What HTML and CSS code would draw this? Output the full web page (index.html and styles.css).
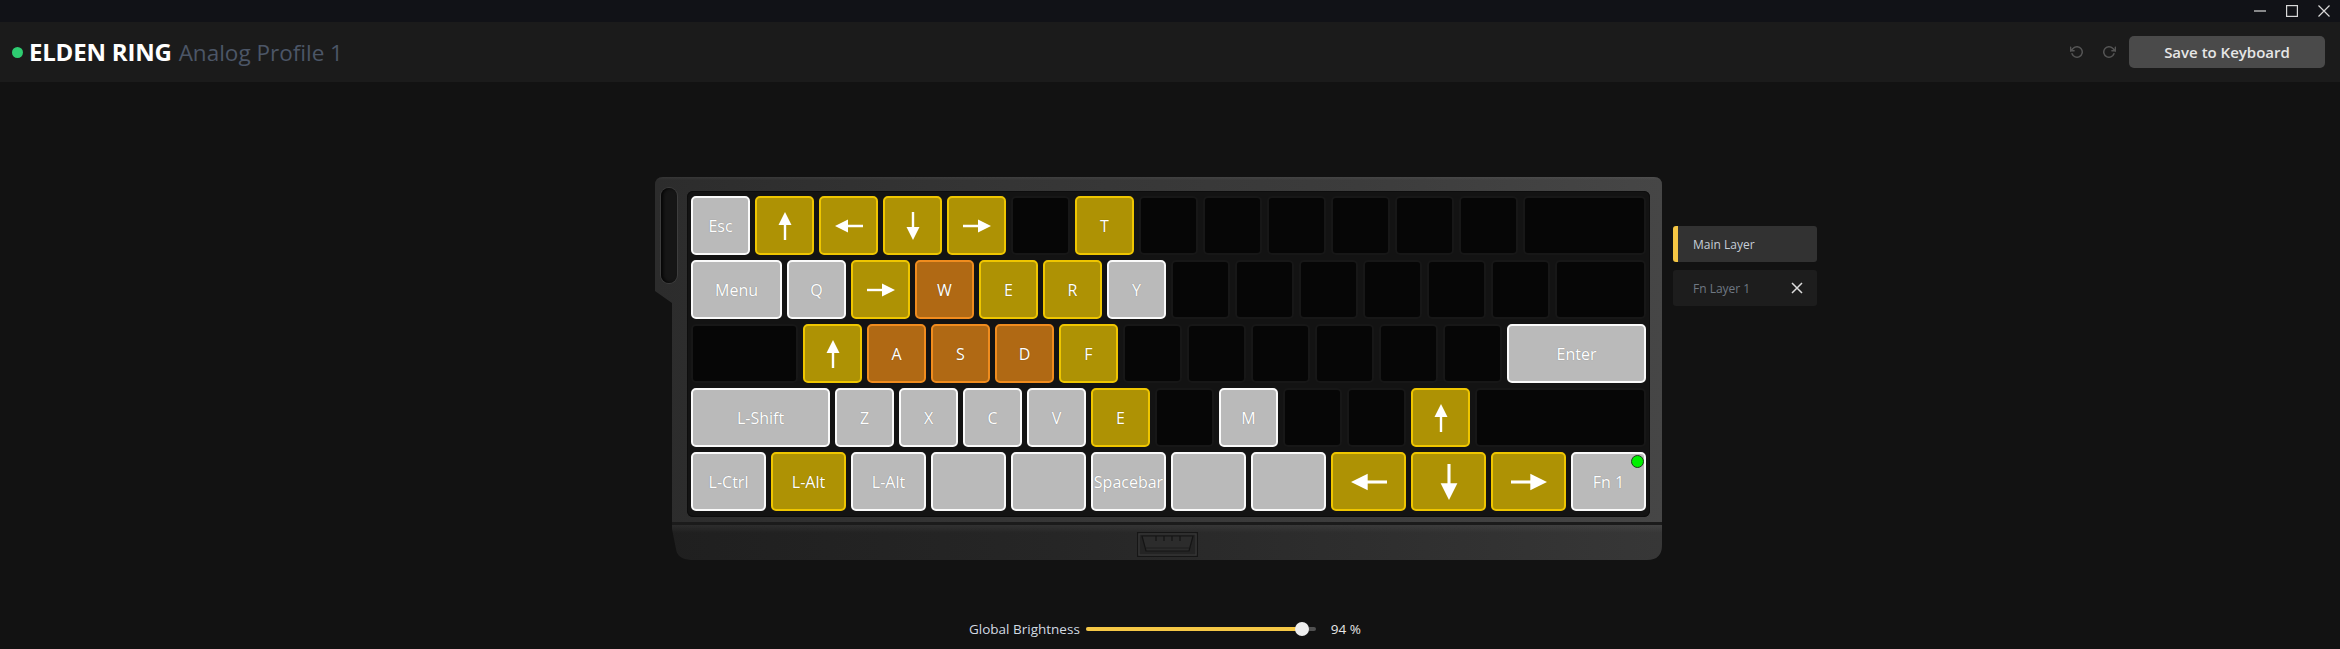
FILE: index.html
```html
<!DOCTYPE html>
<html lang="en">
<head>
<meta charset="utf-8">
<title>Analog Profile</title>
<link rel="stylesheet" href="styles.css">
</head>
<body>
<div class="titlebar">
  <div class="winbtn"><svg viewBox="0 0 12 12"><path d="M0 6H12" stroke="#d8d8d8" stroke-width="1.2"/></svg></div>
  <div class="winbtn"><svg viewBox="0 0 12 12"><rect x="0.6" y="0.6" width="10.8" height="10.8" fill="none" stroke="#d8d8d8" stroke-width="1.2"/></svg></div>
  <div class="winbtn"><svg viewBox="0 0 12 12"><path d="M0.5 0.5L11.5 11.5M11.5 0.5L0.5 11.5" stroke="#d8d8d8" stroke-width="1.2"/></svg></div>
</div>
<header class="header">
  <span class="status-dot"></span>
  <h1 class="title"><span class="game">ELDEN RING</span><span class="profile">Analog Profile 1</span></h1>
  <div class="header-actions">
    <button class="icon-btn undo"><svg viewBox="0 0 24 24"><polyline points="1 4 1 10 7 10" fill="none" stroke="#555" stroke-width="2.6" stroke-linecap="round" stroke-linejoin="round"/><path d="M3.51 15a9 9 0 1 0 2.13-9.36L1 10" fill="none" stroke="#555" stroke-width="2.6" stroke-linecap="round" stroke-linejoin="round"/></svg></button>
    <button class="icon-btn redo"><svg viewBox="0 0 24 24"><polyline points="23 4 23 10 17 10" fill="none" stroke="#555" stroke-width="2.6" stroke-linecap="round" stroke-linejoin="round"/><path d="M20.49 15a9 9 0 1 1-2.12-9.36L23 10" fill="none" stroke="#555" stroke-width="2.6" stroke-linecap="round" stroke-linejoin="round"/></svg></button>
    <button class="save-btn">Save to Keyboard</button>
  </div>
</header>
<main class="main">
  <div class="stage">
    <div class="chassis">
      <div class="topcase">
        <div class="ear"><div class="slot"></div></div>
        <div class="plate">
          <div class="krow">
            <div class="key k1 gray">Esc</div>
            <div class="key k1 yel"><svg class="arr up" viewBox="0 0 28 14"><path d="M0 7H16" stroke="#fff" stroke-width="2.4"/><path d="M15 0.5L28 7L15 13.5Z" fill="#fff"/></svg></div>
            <div class="key k1 yel"><svg class="arr left" viewBox="0 0 28 14"><path d="M0 7H16" stroke="#fff" stroke-width="2.4"/><path d="M15 0.5L28 7L15 13.5Z" fill="#fff"/></svg></div>
            <div class="key k1 yel"><svg class="arr down" viewBox="0 0 28 14"><path d="M0 7H16" stroke="#fff" stroke-width="2.4"/><path d="M15 0.5L28 7L15 13.5Z" fill="#fff"/></svg></div>
            <div class="key k1 yel"><svg class="arr" viewBox="0 0 28 14"><path d="M0 7H16" stroke="#fff" stroke-width="2.4"/><path d="M15 0.5L28 7L15 13.5Z" fill="#fff"/></svg></div>
            <div class="key k1 off"></div>
            <div class="key k1 yel">T</div>
            <div class="key k1 off"></div>
            <div class="key k1 off"></div>
            <div class="key k1 off"></div>
            <div class="key k1 off"></div>
            <div class="key k1 off"></div>
            <div class="key k1 off"></div>
            <div class="key k2 off"></div>
          </div>
          <div class="krow">
            <div class="key k15 gray">Menu</div>
            <div class="key k1 gray">Q</div>
            <div class="key k1 yel"><svg class="arr" viewBox="0 0 28 14"><path d="M0 7H16" stroke="#fff" stroke-width="2.4"/><path d="M15 0.5L28 7L15 13.5Z" fill="#fff"/></svg></div>
            <div class="key k1 org">W</div>
            <div class="key k1 yel">E</div>
            <div class="key k1 yel">R</div>
            <div class="key k1 gray">Y</div>
            <div class="key k1 off"></div>
            <div class="key k1 off"></div>
            <div class="key k1 off"></div>
            <div class="key k1 off"></div>
            <div class="key k1 off"></div>
            <div class="key k1 off"></div>
            <div class="key k15 off"></div>
          </div>
          <div class="krow">
            <div class="key k175 off"></div>
            <div class="key k1 yel"><svg class="arr up" viewBox="0 0 28 14"><path d="M0 7H16" stroke="#fff" stroke-width="2.4"/><path d="M15 0.5L28 7L15 13.5Z" fill="#fff"/></svg></div>
            <div class="key k1 org">A</div>
            <div class="key k1 org">S</div>
            <div class="key k1 org">D</div>
            <div class="key k1 yel">F</div>
            <div class="key k1 off"></div>
            <div class="key k1 off"></div>
            <div class="key k1 off"></div>
            <div class="key k1 off"></div>
            <div class="key k1 off"></div>
            <div class="key k1 off"></div>
            <div class="key k225 gray">Enter</div>
          </div>
          <div class="krow">
            <div class="key k225 gray">L-Shift</div>
            <div class="key k1 gray">Z</div>
            <div class="key k1 gray">X</div>
            <div class="key k1 gray">C</div>
            <div class="key k1 gray">V</div>
            <div class="key k1 yel">E</div>
            <div class="key k1 off"></div>
            <div class="key k1 gray">M</div>
            <div class="key k1 off"></div>
            <div class="key k1 off"></div>
            <div class="key k1 yel"><svg class="arr up" viewBox="0 0 28 14"><path d="M0 7H16" stroke="#fff" stroke-width="2.4"/><path d="M15 0.5L28 7L15 13.5Z" fill="#fff"/></svg></div>
            <div class="key k275 off"></div>
          </div>
          <div class="krow">
            <div class="key k125 gray">L-Ctrl</div>
            <div class="key k125 yel">L-Alt</div>
            <div class="key k125 gray">L-Alt</div>
            <div class="key k125 gray"></div>
            <div class="key k125 gray"></div>
            <div class="key k125 gray">Spacebar</div>
            <div class="key k125 gray"></div>
            <div class="key k125 gray"></div>
            <div class="key k125 yel"><svg class="arr big left" viewBox="0 0 28 14"><path d="M0 7H16" stroke="#fff" stroke-width="2.4"/><path d="M15 0.5L28 7L15 13.5Z" fill="#fff"/></svg></div>
            <div class="key k125 yel"><svg class="arr big down" viewBox="0 0 28 14"><path d="M0 7H16" stroke="#fff" stroke-width="2.4"/><path d="M15 0.5L28 7L15 13.5Z" fill="#fff"/></svg></div>
            <div class="key k125 yel"><svg class="arr big" viewBox="0 0 28 14"><path d="M0 7H16" stroke="#fff" stroke-width="2.4"/><path d="M15 0.5L28 7L15 13.5Z" fill="#fff"/></svg></div>
            <div class="key k125 gray">Fn 1<span class="fn-dot"></span></div>
          </div>
        </div>
      </div>
      <div class="base">
        <div class="connector"><svg viewBox="0 0 61 25"><rect x="0.5" y="0.5" width="60" height="24" fill="#242424" stroke="#161616"/><rect x="2" y="2" width="57" height="21" fill="none" stroke="#3a3a3a" stroke-width="1"/><path d="M5 4H56L52 19H9Z" fill="#2c2c2c" stroke="#141414" stroke-width="1.2"/><path d="M9 16H52" stroke="#1c1c1c"/><path d="M19 4V9M27 4V9M35 4V9M43 4V9" stroke="#141414" stroke-width="1.2"/></svg></div>
      </div>
    </div>
    <div class="layers">
      <div class="layer active">Main Layer</div>
      <div class="layer inactive"><span>Fn Layer 1</span><svg class="close-x" viewBox="0 0 12 12"><path d="M1 1L11 11M11 1L1 11" stroke="#dcdcdc" stroke-width="1.5"/></svg></div>
    </div>
  </div>
  <div class="brightness">
    <span class="b-label">Global Brightness</span>
    <div class="slider">
      <div class="track"><div class="fill" style="width:94%"></div></div>
      <div class="thumb" style="left:94%"></div>
    </div>
    <span class="pct">94 %</span>
  </div>
</main>
</body>
</html>
```

FILE: styles.css
```css
* { box-sizing: border-box; }
html, body { margin: 0; padding: 0; }
body {
  width: 2340px;
  height: 649px;
  overflow: hidden;
  background: #121212;
  font-family: "Open Sans", "Noto Sans", sans-serif;
  color: #fff;
}

/* title bar */
.titlebar {
  height: 22px;
  background: #111217;
  display: flex;
  justify-content: flex-end;
}
.winbtn {
  width: 32px;
  height: 22px;
  display: flex;
  align-items: center;
  justify-content: center;
}
.winbtn svg { width: 12px; height: 12px; display: block; }

/* header */
.header {
  height: 60px;
  background: #1b1b1b;
  display: flex;
  align-items: center;
  padding: 0 15px 0 12px;
}
.status-dot {
  width: 11px;
  height: 11px;
  border-radius: 50%;
  background: #2ecc71;
  margin-right: 6px;
  flex: none;
}
.title {
  margin: 0;
  font-size: 24px;
  line-height: 1;
  display: flex;
  align-items: baseline;
  gap: 7px;
}
.game { font-weight: 700; color: #ffffff; letter-spacing: -0.2px; }
.profile { font-weight: 400; font-size: 22.5px; color: #4c5667; }
.header-actions {
  margin-left: auto;
  display: flex;
  align-items: center;
}
.icon-btn {
  background: none;
  border: 0;
  padding: 0;
  width: 14px;
  height: 14px;
  display: block;
}
.icon-btn svg { width: 14px; height: 14px; display: block; }
.icon-btn.undo { margin-right: 18px; }
.icon-btn.redo { margin-right: 13px; }
.save-btn {
  width: 196px;
  height: 32px;
  border: 0;
  border-radius: 5px;
  background: #4a4a4a;
  color: #e6e6e6;
  font-family: "Open Sans", sans-serif;
  font-size: 15px;
  font-weight: 600;
}

/* stage */
.stage {
  display: flex;
  align-items: flex-start;
  gap: 11px;
  padding: 95px 0 0 655px;
}
.chassis {
  width: 1007px;
  height: 383px;
  flex: none;
  display: flex;
  flex-direction: column;
  clip-path: path("M8 0H999Q1007 0 1007 8V368Q1007 383 992 383H36Q22 382 21 372L17 352V126L0 114V8Q0 0 8 0Z");
}
.topcase {
  height: 345px;
  display: flex;
  align-items: flex-start;
  padding-right: 12px;
  background:
    linear-gradient(180deg, rgba(255,255,255,0.05) 0, rgba(255,255,255,0) 3px),
    linear-gradient(90deg, #2c2c2c 0%, #353535 35%, #3c3c3c 70%, #464646 100%);
}
.ear {
  width: 32px;
  flex: none;
  padding: 11px 0 0 6px;
}
.slot {
  width: 16px;
  height: 95px;
  border-radius: 8px;
  background: #161616;
  box-shadow: inset 2px 0 3px #050505, 0 0 0 1px #3e3e3e;
}
.plate {
  margin-top: 14px;
  width: 963px;
  flex: none;
  padding: 5px 4px 6px 4px;
  background: #131313;
  border-radius: 6px;
  box-shadow: inset 0 0 0 1px #0d0d0d;
  display: flex;
  flex-direction: column;
  gap: 5px;
}
.krow {
  display: flex;
  gap: 5px;
  height: 59px;
}
.key {
  position: relative;
  flex: none;
  height: 59px;
  border-radius: 5px;
  display: flex;
  align-items: center;
  justify-content: center;
  font-size: 16px;
  color: #ffffff;
  text-shadow: 0 0 1px rgba(0,0,0,0.35);
}
.k1 { width: 59px; }
.k125 { width: 75px; }
.k15 { width: 91px; }
.k175 { width: 107px; }
.k2 { width: 123px; }
.k225 { width: 139px; }
.k275 { width: 171px; }

.gray { background: #bababa; border: 2px solid #fafafa; }
.yel { background: #ae9204; border: 2px solid #efc600; }
.org { background: #b06914; border: 2px solid #f08c1e; }
.off { background: #060606; border: 2px solid #171717; }

.arr { width: 28px; height: 14px; display: block; }
.arr.big { width: 36px; height: 18px; }
.arr.up { transform: rotate(-90deg); }
.arr.down { transform: rotate(90deg); }
.arr.left { transform: rotate(180deg); }

.fn-dot {
  position: absolute;
  top: 1px;
  right: 0;
  width: 13px;
  height: 13px;
  border-radius: 50%;
  background: #00f000;
  border: 1px solid #1e3a1e;
}

.base {
  height: 38px;
  padding: 7px 0 0 482px;
  border-top: 3px solid #1b1b1b;
  background:
    linear-gradient(180deg, rgba(255,255,255,0.06) 0, rgba(255,255,255,0) 8px),
    linear-gradient(90deg, #1f1f1f 0%, #262626 40%, #2e2e2e 70%, #373737 100%);
}
.connector { width: 61px; height: 25px; }
.connector svg { width: 61px; height: 25px; display: block; }

/* layers */
.layers {
  margin-top: 49px;
  width: 144px;
  flex: none;
  display: flex;
  flex-direction: column;
  gap: 8px;
}
.layer {
  height: 36px;
  border-radius: 3px;
  display: flex;
  align-items: center;
  font-size: 12px;
}
.layer.active {
  background: #323232;
  border-left: 5px solid #f5c644;
  padding-left: 15px;
  color: #c6ced8;
}
.layer.inactive {
  background: #1d1d1d;
  padding: 0 14px 0 20px;
  color: #6f7883;
  justify-content: space-between;
}
.close-x { width: 12px; height: 12px; display: block; }

/* brightness */
.brightness {
  display: flex;
  align-items: center;
  height: 20px;
  margin-top: 59px;
  padding-left: 969px;
  font-size: 13.5px;
  color: #d3dae2;
}
.slider {
  position: relative;
  width: 230px;
  height: 14px;
  margin-left: 6px;
  display: flex;
  align-items: center;
}
.track {
  width: 100%;
  height: 4px;
  border-radius: 2px;
  background: #505050;
}
.fill {
  height: 100%;
  border-radius: 2px;
  background: #f6c846;
}
.thumb {
  position: absolute;
  top: 0;
  width: 14px;
  height: 14px;
  margin-left: -7px;
  border-radius: 50%;
  background: #eeeeee;
}
.pct { margin-left: 15px; color: #e6e6e6; }
```
